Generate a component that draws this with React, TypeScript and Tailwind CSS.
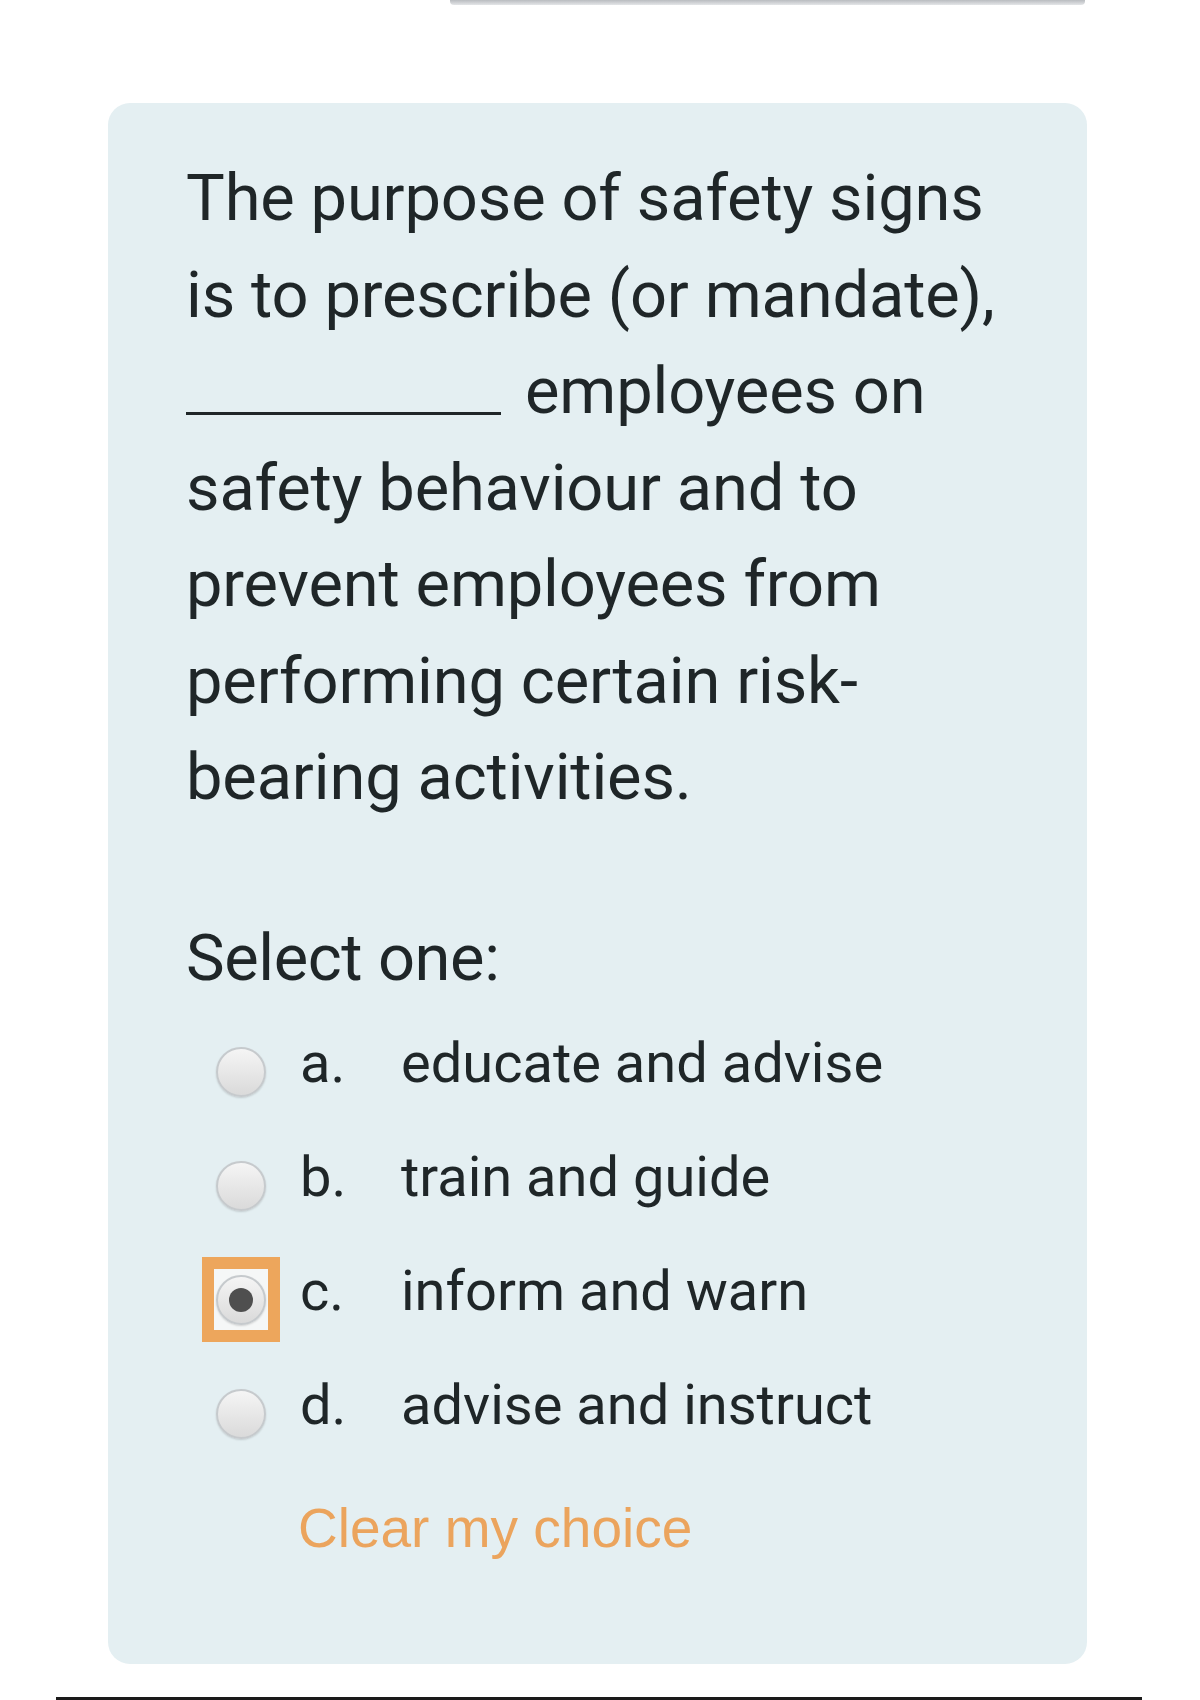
const OPTIONS = [
  { key: "a.", text: "educate and advise", checked: false },
  { key: "b.", text: "train and guide", checked: false },
  { key: "c.", text: "inform and warn", checked: true },
  { key: "d.", text: "advise and instruct", checked: false },
];

const QUESTION = [
  "The purpose of safety signs",
  "is to prescribe (or mandate),",
  null,
  "safety behaviour and to",
  "prevent employees from",
  "performing certain risk-",
  "bearing activities.",
];

function Radio({ checked }: { checked: boolean }) {
  const circle = (
    <span className="flex h-[50px] w-[50px] items-center justify-center rounded-full border-2 border-[#c6cacd] bg-gradient-to-b from-[#f5f5f5] to-[#dadada] shadow-[0_1px_2px_rgba(0,0,0,0.15)]">
      {checked && <span className="h-[24px] w-[24px] rounded-full bg-[#4f4f4f]" />}
    </span>
  );
  if (!checked) return <span className="mt-[18px] flex h-[85px] w-[78px] items-center justify-center">{circle}</span>;
  return (
    <span className="mt-[18px] flex h-[85px] w-[78px] items-center justify-center border-[12px] border-[#eda65c] bg-[#f5f7f7]">
      {circle}
    </span>
  );
}

export default function App() {
  return (
    <div className="relative h-[1700px] w-[1200px] overflow-hidden bg-white font-['Roboto',sans-serif] text-[#1f2628]">
      {/* top strip */}
      <div className="ml-[450px] h-[5px] w-[635px] rounded-b bg-gradient-to-b from-[#b9bcc0] to-[#e4e6e8]" />

      {/* question card */}
      <div className="ml-[108px] mt-[98px] h-[1561px] w-[979px] rounded-[22px] bg-[#e4eff2] pl-[78px] pt-[47px]">
        <div className="text-[65px] leading-[96.5px] tracking-[-0.15px]">
          {QUESTION.map((line, i) =>
            line === null ? (
              <div key={i}>
                <span className="mr-[24px] inline-block w-[315px] border-b-[3px] border-[#1f2628] align-[-2px]" />
                employees on
              </div>
            ) : (
              <div key={i}>{line}</div>
            )
          )}
        </div>

        <div className="mt-[84px] text-[65px] leading-[96px] tracking-[-0.4px]">Select one:</div>

        <div className="flex flex-col pl-[16px]">
          {OPTIONS.map((o) => (
            <div key={o.key} className="flex h-[114px] items-center text-[56px]">
              <Radio checked={o.checked} />
              <span className="ml-[20px] w-[101px]">{o.key}</span>
              <span>{o.text}</span>
            </div>
          ))}
        </div>

        <div className="mt-[31px] pl-[112px] font-['Liberation_Sans',sans-serif] text-[55px] leading-[70px] text-[#eba45d]">
          Clear my choice
        </div>
      </div>

      {/* bottom rule */}
      <div className="absolute bottom-0 left-[56px] h-[3px] w-[1086px] bg-[#1a1a1a]" />
    </div>
  );
}
